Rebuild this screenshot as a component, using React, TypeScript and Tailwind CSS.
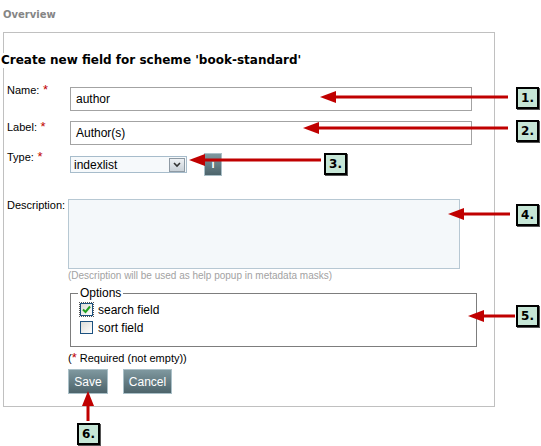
import React from "react";

const Star = () => <span className="text-[#c00000] text-[13px] leading-[10px]"> *</span>;

function Badge({ n, x, y }: { n: string; x: string; y: string }) {
  return (
    <div
      className={`absolute ${x} ${y} w-[23px] h-[22px] border-2 border-black bg-[#c6e6d6] flex items-center justify-center text-[12px] font-bold text-black shadow-[1px_1px_0_#555]`}
      style={{ fontFamily: '"DejaVu Sans", sans-serif' }}
    >
      {n}
    </div>
  );
}

function Checkbox({ checked }: { checked?: boolean }) {
  return (
    <div className={checked ? "outline outline-1 outline-dotted outline-[#555] p-0" : ""}>
      <div className="w-[13px] h-[13px] border border-[#1c5180] bg-gradient-to-br from-[#dcdcd7] to-white flex items-center justify-center">
        {checked && (
          <svg width="9" height="9" viewBox="0 0 9 9">
            <path d="M1 4.5 L3.5 7 L8 1.5" stroke="#21a121" strokeWidth="2" fill="none" />
          </svg>
        )}
      </div>
    </div>
  );
}

function SlateButton({ label, w }: { label: string; w: string }) {
  return (
    <div
      className={`${w} h-[25px] border border-[#aac0c8] bg-gradient-to-b from-[#7f989f] to-[#4d646b] text-white text-[12px] flex items-center justify-center`}
    >
      {label}
    </div>
  );
}

export default function App() {
  return (
    <div
      className="relative w-[541px] h-[446px] bg-white overflow-hidden text-black"
      style={{ fontFamily: '"Liberation Sans", Arial, sans-serif' }}
    >
      <div
        className="pl-[3px] pt-[9px] h-[32px] text-[10px] leading-[12px] font-bold text-[#858585]"
        style={{ fontFamily: '"DejaVu Sans", sans-serif' }}
      >
        Overview
      </div>

      <div className="ml-[3px] w-[492px] h-[375px] border border-[#c0c0c0]">
        <h1
          className="relative -ml-[3px] mt-[20px] w-fit bg-white text-[12px] leading-[15px] font-bold"
          style={{ fontFamily: '"DejaVu Sans", sans-serif' }}
        >
          Create new field for scheme 'book-standard'
        </h1>

        {/* Name */}
        <div className="flex mt-[16px]">
          <div className="w-[66px] pl-[3px] text-[11px] leading-[12px]">
            Name:<Star />
          </div>
          <div className="mt-[3px] w-[402px] h-[24px] border border-[#a3a3a3] px-[5px] text-[12px] flex items-center">
            author
          </div>
        </div>

        {/* Label */}
        <div className="flex mt-[10px]">
          <div className="w-[66px] pl-[3px] text-[11px] leading-[12px]">
            Label:<Star />
          </div>
          <div className="w-[402px] h-[24px] border border-[#a3a3a3] px-[5px] text-[12px] flex items-center">
            Author(s)
          </div>
        </div>

        {/* Type */}
        <div className="flex mt-[6px]">
          <div className="w-[66px] pl-[3px] text-[11px] leading-[12px]">
            Type:<Star />
          </div>
          <div className="mt-[5px] w-[117px] h-[17px] border border-[#a7bccb] bg-[#f6f9fb] pl-[3px] pr-[1px] text-[12px] flex items-center justify-between">
            <span>indexlist</span>
            <div className="w-[16px] h-[14px] border border-[#8e9aa4] bg-gradient-to-b from-[#eef1f4] to-[#c9d1d8] flex items-center justify-center">
              <svg width="8" height="6" viewBox="0 0 8 6">
                <path d="M1 1 L4 4 L7 1" stroke="#333" strokeWidth="1.6" fill="none" />
              </svg>
            </div>
          </div>
          <div className="ml-[17px] mt-[2px] w-[18px] h-[23px] border border-[#aac0c8] bg-gradient-to-b from-[#7f989f] to-[#4d646b] flex items-center justify-center text-white text-[11px] font-bold">
            i
          </div>
        </div>

        {/* Description */}
        <div className="flex mt-[23px]">
          <div className="w-[64px] pl-[3px] text-[11px] leading-[12px]">Description:</div>
          <div className="w-[392px] h-[70px] border border-[#b7c8d3] bg-[#f4f8fa]" />
        </div>
        <div className="ml-[64px] mt-[1px] text-[10px] leading-[12px] text-[#a2a2a2]">
          (Description will be used as help popup in metadata masks)
        </div>

        {/* Options */}
        <fieldset className="ml-[66px] mt-[4px] w-[407px] h-[61px] border border-[#7d7d7d] pl-[7px] pr-[9px]">
          <legend className="text-[12px] leading-[14px] px-[2px]">Options</legend>
          <div className="flex items-center gap-[5px] mt-[3px] ml-[2px] h-[13px]">
            <Checkbox checked />
            <span className="text-[12px]">search field</span>
          </div>
          <div className="flex items-center gap-[5px] mt-[5px] ml-[2px] h-[13px]">
            <Checkbox />
            <span className="text-[12px]">sort field</span>
          </div>
        </fieldset>

        <div className="ml-[64px] mt-[5px] text-[11px] leading-[12px]">
          (<span className="text-[#c00000] text-[13px]">*</span> Required (not empty))
        </div>

        <div className="flex gap-[15px] ml-[64px] mt-[5px]">
          <SlateButton label="Save" w="w-[40px]" />
          <SlateButton label="Cancel" w="w-[49px]" />
        </div>
      </div>

      {/* annotation arrows */}
      <svg className="absolute left-0 top-0" width="541" height="446">
        <g fill="#c00000" stroke="#c00000">
          <line x1="508" y1="97" x2="332" y2="97" strokeWidth="3" />
          <polygon points="320,97 336,91 336,103" stroke="none" />
          <line x1="508" y1="128" x2="315" y2="128" strokeWidth="3" />
          <polygon points="303,128 319,122 319,134" stroke="none" />
          <line x1="321" y1="160" x2="201" y2="160" strokeWidth="3" />
          <polygon points="189,160 205,154 205,166" stroke="none" />
          <line x1="510" y1="214" x2="460" y2="214" strokeWidth="3" />
          <polygon points="448,214 464,208 464,220" stroke="none" />
          <line x1="515" y1="316" x2="480" y2="316" strokeWidth="3" />
          <polygon points="468,316 484,310 484,322" stroke="none" />
          <line x1="88" y1="421" x2="88" y2="402" strokeWidth="3" />
          <polygon points="88,391 82,406 94,406" stroke="none" />
        </g>
      </svg>
      <Badge n="1." x="left-[516px]" y="top-[87px]" />
      <Badge n="2." x="left-[516px]" y="top-[120px]" />
      <Badge n="3." x="left-[324px]" y="top-[153px]" />
      <Badge n="4." x="left-[516px]" y="top-[204px]" />
      <Badge n="5." x="left-[516px]" y="top-[305px]" />
      <Badge n="6." x="left-[77px]" y="top-[423px]" />
    </div>
  );
}
